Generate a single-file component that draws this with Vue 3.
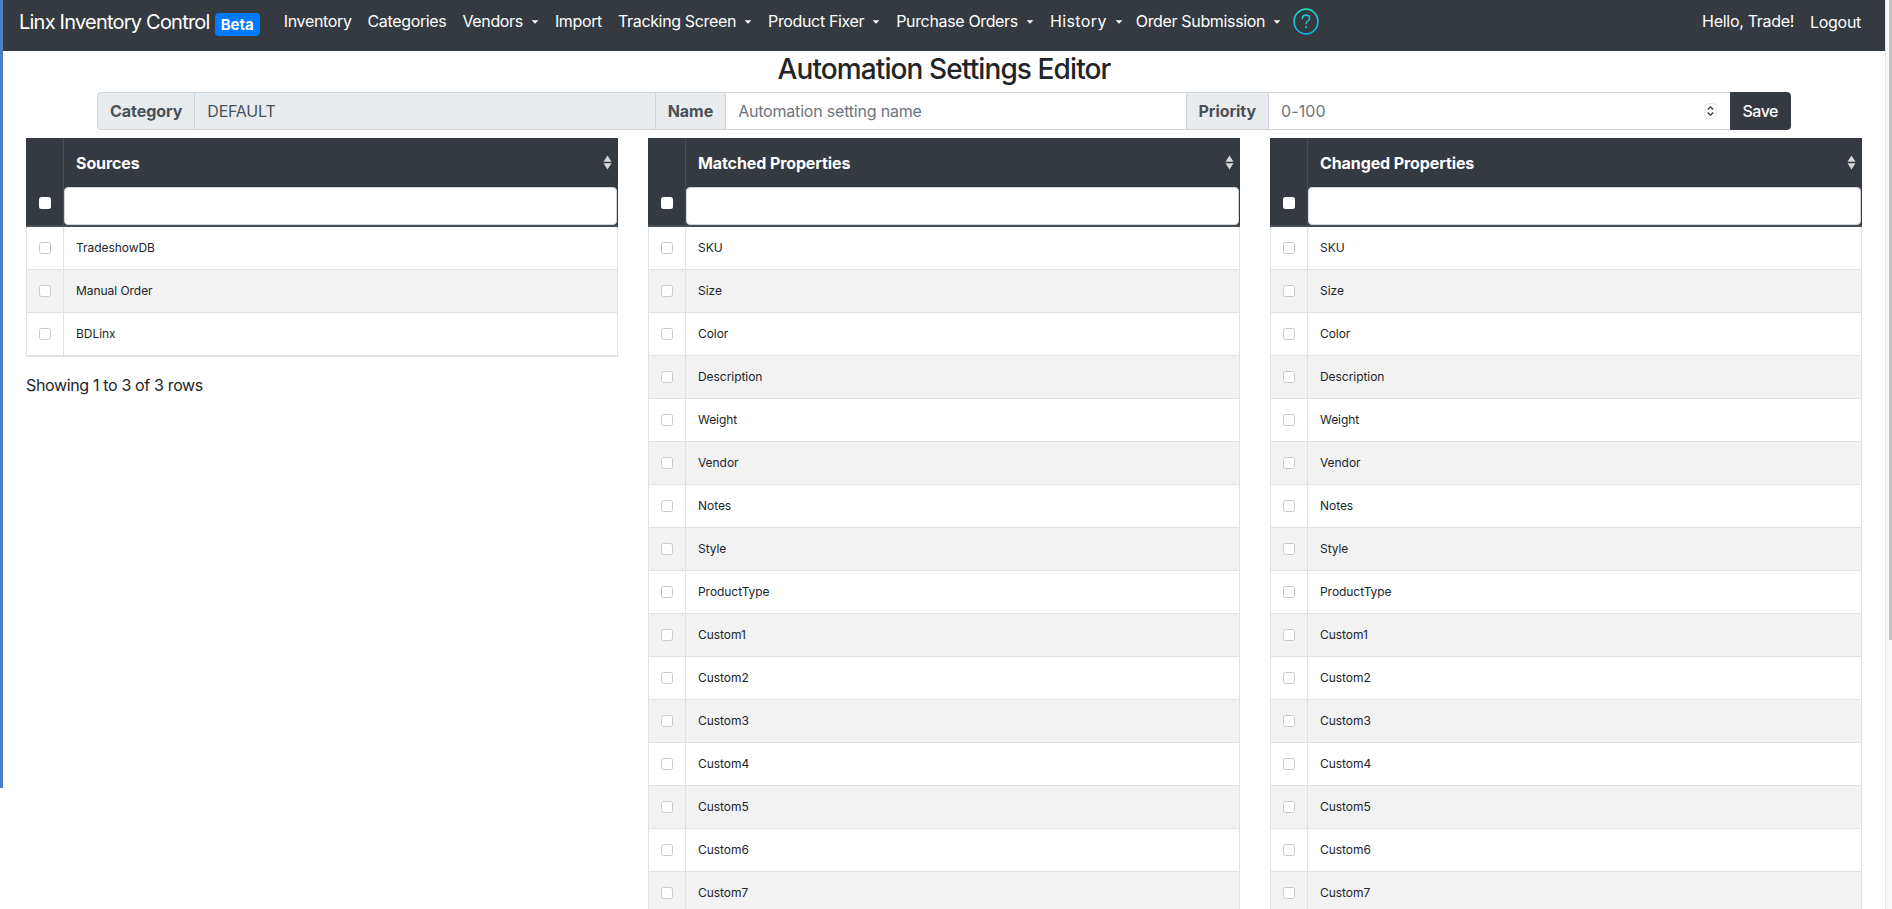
<script setup>
const nav = [
  { label: 'Inventory' },
  { label: 'Categories' },
  { label: 'Vendors', caret: true },
  { label: 'Import' },
  { label: 'Tracking Screen', caret: true },
  { label: 'Product Fixer', caret: true },
  { label: 'Purchase Orders', caret: true },
  { label: 'History', caret: true },
  { label: 'Order Submission', caret: true }
]
const props = ['SKU', 'Size', 'Color', 'Description', 'Weight', 'Vendor', 'Notes', 'Style', 'ProductType', 'Custom1', 'Custom2', 'Custom3', 'Custom4', 'Custom5', 'Custom6', 'Custom7']
const tables = [
  { title: 'Sources', rows: ['TradeshowDB', 'Manual Order', 'BDLinx'], footer: 'Showing 1 to 3 of 3 rows' },
  { title: 'Matched Properties', rows: props },
  { title: 'Changed Properties', rows: props }
]
</script>

<template>
  <div class="viewport">
    <div class="page">
      <div class="accent"></div>
      <div class="main">
        <nav class="navbar">
          <span class="brand">Linx Inventory Control</span>
          <span class="badge">Beta</span>
          <ul class="nav-list">
            <li v-for="item in nav" :key="item.label" class="nav-item" :class="{ wide: item.label === 'History' }">
              {{ item.label }}<span v-if="item.caret" class="caret"></span>
            </li>
          </ul>
          <svg class="help" width="26" height="27" viewBox="0 0 26 27" fill="none">
            <defs>
              <linearGradient id="helpGrad" x1="0" y1="0" x2="0" y2="1">
                <stop offset="0" stop-color="#17e0c4" />
                <stop offset="1" stop-color="#10b0ea" />
              </linearGradient>
            </defs>
            <ellipse cx="13" cy="13.5" rx="11.9" ry="12.4" stroke="url(#helpGrad)" stroke-width="1.6" />
            <path d="M9.4 10.6c0-2.2 1.6-3.5 3.6-3.5s3.6 1.2 3.6 3.2c0 2.6-3.5 2.8-3.5 5.4" stroke="#14c4d8" stroke-width="1.6" stroke-linecap="round" />
            <circle cx="13.1" cy="19.2" r="1.1" fill="#10b8e0" />
          </svg>
          <div class="nav-right">
            <span>Hello, Trade!</span>
            <span class="logout">Logout</span>
          </div>
        </nav>
        <h3 class="title">Automation Settings Editor</h3>
        <div class="input-group">
          <span class="addon first">Category</span>
          <div class="field readonly">DEFAULT</div>
          <span class="addon">Name</span>
          <div class="field placeholder">Automation setting name</div>
          <span class="addon">Priority</span>
          <div class="field placeholder priority">
            <span>0-100</span>
            <svg class="spinner" width="13" height="16" viewBox="0 0 13 16" fill="none">
              <rect x="0.5" y="0.5" width="12" height="15" rx="4" fill="#fff" stroke="#e4e4e4" />
              <path d="M3.8 6.5 6.5 3.8l2.7 2.7M3.8 9.5l2.7 2.7 2.7-2.7" stroke="#333" stroke-width="1.3" />
            </svg>
          </div>
          <button class="save">Save</button>
        </div>
        <div class="tables">
          <section v-for="t in tables" :key="t.title" class="col">
            <div class="thead">
              <div class="head-check">
                <span class="white-check"></span>
              </div>
              <div class="head-main">
                <div class="head-title">
                  <span>{{ t.title }}</span>
                  <svg class="sort" width="9" height="15" viewBox="0 0 9 15">
                    <path d="M4.5 0.5 8.5 6.7H0.5z" fill="#d8d8d8" />
                    <path d="M4.5 14.5 8.5 8.3H0.5z" fill="#d8d8d8" />
                  </svg>
                </div>
                <div class="filter"></div>
              </div>
            </div>
            <div class="tbody" :class="{ closed: t.footer }">
              <div v-for="(row, i) in t.rows" :key="row" class="row" :class="{ odd: i % 2 === 1 }">
                <div class="cell-check"><span class="check"></span></div>
                <div class="cell-text">{{ row }}</div>
              </div>
            </div>
            <p v-if="t.footer" class="footer">{{ t.footer }}</p>
          </section>
        </div>
      </div>
    </div>
    <div class="scrollbar"><div class="thumb"></div></div>
  </div>
</template>

<style>
html, body { margin: 0; height: 100%; overflow: hidden; background: #fff; }
</style>

<style scoped>
.viewport {
  display: flex;
  height: 909px;
  overflow: hidden;
  font-family: Inter, "Liberation Sans", sans-serif;
  color: #212529;
  font-size: 16px;
}
.page { flex: 1; min-width: 0; position: relative; }
.accent { position: absolute; left: 0; top: 0; width: 3px; height: 788px; background: #4f7fc3; }
.main { margin-left: 3px; }
.navbar {
  height: 51px;
  background: #343a40;
  display: flex;
  align-items: center;
  padding: 0 16px 8px 16px;
  color: #fff;
  box-sizing: border-box;
}
.brand { font-size: 20px; letter-spacing: -0.78px; }
.badge {
  background: #007bff;
  color: #fff;
  font-weight: 700;
  font-size: 15px;
  border-radius: 4px;
  padding: 0 6px;
  height: 23px;
  line-height: 24px;
  margin-left: 5px;
  margin-top: 6px;
}
.nav-list { display: flex; list-style: none; margin: 0 0 2px 16px; padding: 0; }
.nav-item { padding: 0 8px; white-space: nowrap; font-size: 16px; letter-spacing: -0.35px; }
.nav-item.wide { letter-spacing: 0.4px; padding-right: 5px; }
.caret {
  display: inline-block;
  margin-left: 8px;
  vertical-align: 3px;
  border-top: 4.8px solid #fff;
  border-left: 4.8px solid transparent;
  border-right: 4.8px solid transparent;
  transform: scale(.85);
}
.help { margin-left: 4px; }
.nav-right { margin: 0 0 2px auto; display: flex; gap: 16px; padding-right: 8px; letter-spacing: -0.3px; }
.logout { position: relative; top: 1px; }
.title {
  margin: 0 0 6px;
  padding-top: 2px;
  font-size: 28px;
  font-weight: 500;
  line-height: 33px;
  text-align: center;
  letter-spacing: -0.9px;
}
.input-group {
  display: flex;
  margin: 0 94px;
  height: 38px;
  box-sizing: border-box;
}
.addon {
  display: flex;
  align-items: center;
  background: #e9ecef;
  border: 1px solid #ced4da;
  padding: 0 12px;
  font-weight: 700;
  color: #495057;
  margin-left: -1px;
  letter-spacing: -0.05px;
}
.addon.first { margin-left: 0; border-radius: 4px 0 0 4px; }
.field {
  flex: 1 1 0;
  min-width: 0;
  display: flex;
  align-items: center;
  border: 1px solid #ced4da;
  padding: 0 12px;
  margin-left: -1px;
  color: #6c757d;
  letter-spacing: -0.2px;
}
.field.readonly { background: #e9ecef; color: #495057; }
.priority { justify-content: space-between; padding-right: 13px; }
.priority > span { letter-spacing: 0.1px; }
.spinner { flex: none; }
.save {
  background: #343a40;
  color: #fff;
  border: 1px solid #343a40;
  border-radius: 0 4px 4px 0;
  padding: 0 12px;
  font: 500 16px Inter, "Liberation Sans", sans-serif;
  letter-spacing: -0.5px;
  margin-left: -1px;
}
.tables {
  display: flex;
  gap: 30px;
  padding: 8px 23px 0;
}
.col { flex: 1 1 0; min-width: 0; }
.thead { display: flex; background: #343a40; height: 89px; border-bottom: 2px solid #454d55; box-sizing: border-box; }
.head-check {
  width: 37px;
  flex: none;
  border-right: 1px solid #454d55;
  display: flex;
  align-items: flex-end;
  justify-content: center;
  padding-bottom: 16px;
  box-sizing: content-box;
  height: 71px;
}
.white-check {
  width: 12px;
  height: 12px;
  background: #fff;
  border-radius: 2.5px;
}
.head-main { flex: 1; min-width: 0; display: flex; flex-direction: column; }
.head-title {
  height: 49px;
  flex: none;
  display: flex;
  align-items: center;
  justify-content: space-between;
  padding: 0 6px 0 12px;
  box-sizing: border-box;
  color: #fff;
  font-weight: 700;
  font-size: 16px;
  letter-spacing: -0.1px;
}
.filter {
  height: 38px;
  flex: none;
  margin-right: 1px;
  background: #fff;
  border-radius: 4px;
  border: 1px solid #ced4da;
  box-sizing: border-box;
}
.tbody.closed { border-bottom: 1px solid #dee2e6; }
.row {
  display: flex;
  height: 43px;
  box-sizing: border-box;
  border-left: 1px solid #dee2e6;
  border-right: 1px solid #dee2e6;
  border-bottom: 1px solid #dee2e6;
  background: #fff;
}
.row.odd { background: #f2f2f2; }
.cell-check {
  width: 36px;
  flex: none;
  border-right: 1px solid #dee2e6;
  display: flex;
  align-items: center;
  justify-content: center;
}
.check {
  width: 12px;
  height: 12px;
  box-sizing: border-box;
  background: #fff;
  border: 1px solid #c9c9c9;
  border-radius: 2.5px;
}
.cell-text {
  display: flex;
  align-items: center;
  padding: 0 0 2px 12px;
  font-size: 12px;
  letter-spacing: -0.05px;
}
.footer { margin: 18px 0 0; font-size: 16px; letter-spacing: -0.35px; }
.scrollbar {
  width: 7px;
  flex: none;
  background: #f8f8f8;
  border-left: 1px solid #e8e8e8;
  box-sizing: border-box;
  display: flex;
  justify-content: flex-end;
}
.thumb { width: 3px; height: 640px; background: #c2c2c2; }
</style>
